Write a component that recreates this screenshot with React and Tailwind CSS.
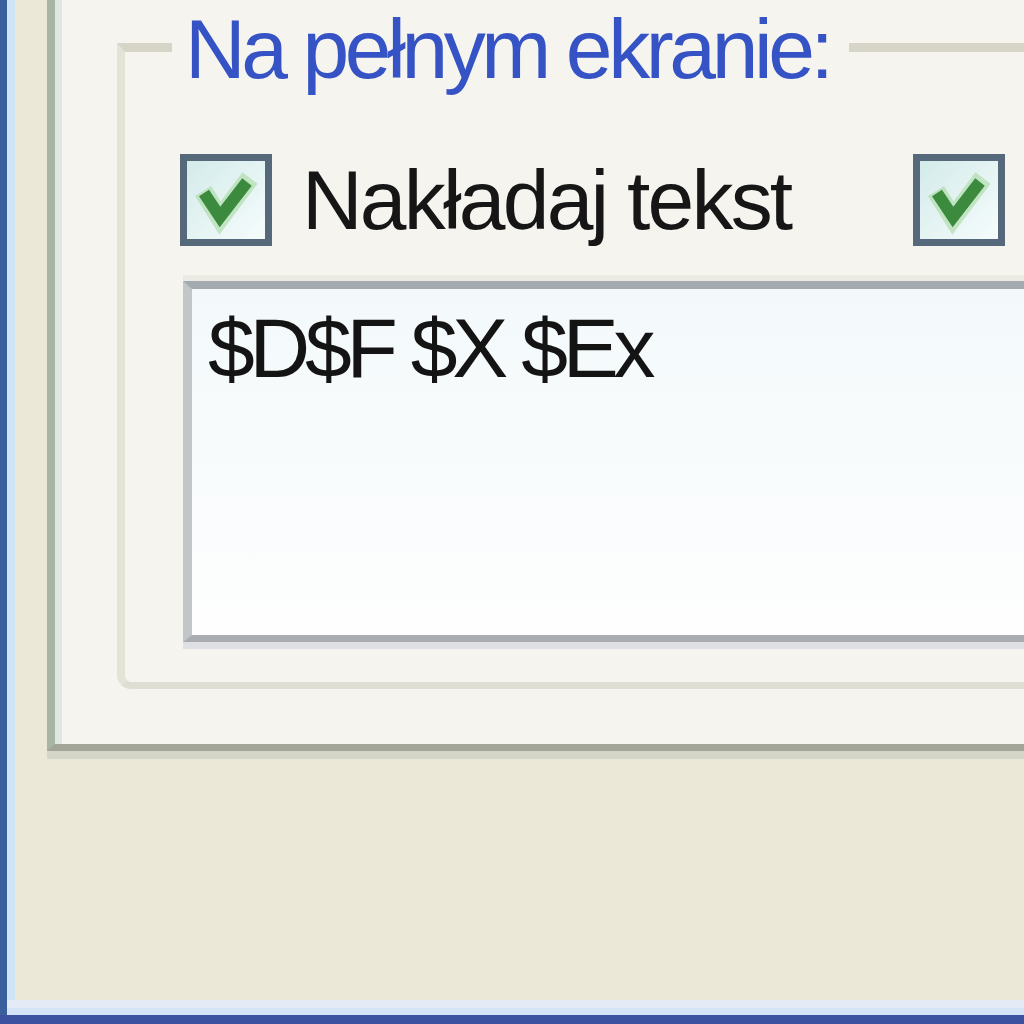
import React from 'react';

// XP-style green tick inside a checkbox
const CheckBox = () => (
  <span className="flex h-[92px] w-[92px] shrink-0 border-[7px] border-[#56697b] bg-linear-to-br from-[#d3ebea] to-[#f6fcfc]">
    <svg viewBox="0 0 78 78" className="h-full w-full">
      <path d="M16 30 L33 57 L63 17" fill="none" stroke="#a9d9a2" strokeWidth="19" opacity="0.6" />
      <path d="M17 32 L33 56 L60 21" fill="none" stroke="#3b8a3e" strokeWidth="12" />
    </svg>
  </span>
);

const App = () => {
  return (
    <div className="flex h-[1024px] w-[1024px] flex-col overflow-hidden bg-[#ebe8d8] font-['Liberation_Sans',Arial,sans-serif]">
      <div className="flex flex-1">
        {/* window frame, left edge */}
        <div className="w-[7px] shrink-0 bg-[#3a5f9c]" />
        <div className="flex flex-1 flex-col">
          <div className="flex flex-1">
            <div className="w-[8px] shrink-0 bg-[#cfe4f7]" />
            <div className="flex flex-1 flex-col bg-[#ebe8d8] pl-[32px]">
              {/* tab page */}
              <div className="flex border-b-[7px] border-l-[8px] border-b-[#a3a599] border-l-[#a8b4a4]">
                <div className="flex flex-1 border-l-[7px] border-l-[#dee7e1] bg-[#f5f4ef] pb-[55px] pl-[55px]">
                  <fieldset className="mt-[4px] flex-1 rounded-bl-[14px] border-b-[7px] border-l-[8px] border-t-[9px] border-r-0 border-b-[#dfded3] border-l-[#e4e3d8] border-t-[#d6d5c8] pb-[33px]">
                    <legend className="ml-[47px] pl-[13px] pr-[20px] pt-[3px] text-[84px] leading-[84px] tracking-[-4.4px] text-[#3553c4]">
                      Na pełnym ekranie:
                    </legend>
                    <div className="pl-[55px]">
                      <div className="mt-[63px] flex h-[92px] items-center">
                        <CheckBox />
                        <span className="ml-[30px] w-[611px] text-[84px] leading-[92px] tracking-[-2.8px] text-[#161616]">
                          Nakładaj tekst
                        </span>
                        <CheckBox />
                      </div>
                      {/* text field */}
                      <div className="ml-[3px] mt-[29px] w-[900px] border-b-[7px] border-t-[6px] border-b-[#dfe0e3] border-t-[#ebebe4]">
                        <div className="h-[361px] border-b-[7px] border-l-[9px] border-t-[8px] border-b-[#a9adb2] border-l-[#c2c6c9] border-t-[#a3abb1] bg-linear-to-b from-[#f3f9fb] to-[#fefefe] pl-[16px] pt-[17px] text-[84px] leading-[84px] tracking-[-5.2px] text-[#141414]">
                          $D$F $X $Ex
                        </div>
                      </div>
                    </div>
                  </fieldset>
                </div>
              </div>
              <div className="h-[8px] bg-[#d6d6c8]" />
            </div>
          </div>
          <div className="h-[8px] bg-[#e4ebf7]" />
          <div className="h-[7px] bg-[#d5e3f8]" />
        </div>
      </div>
      <div className="h-[9px] shrink-0 bg-[#3c52a0]" />
    </div>
  );
};

export default App;
